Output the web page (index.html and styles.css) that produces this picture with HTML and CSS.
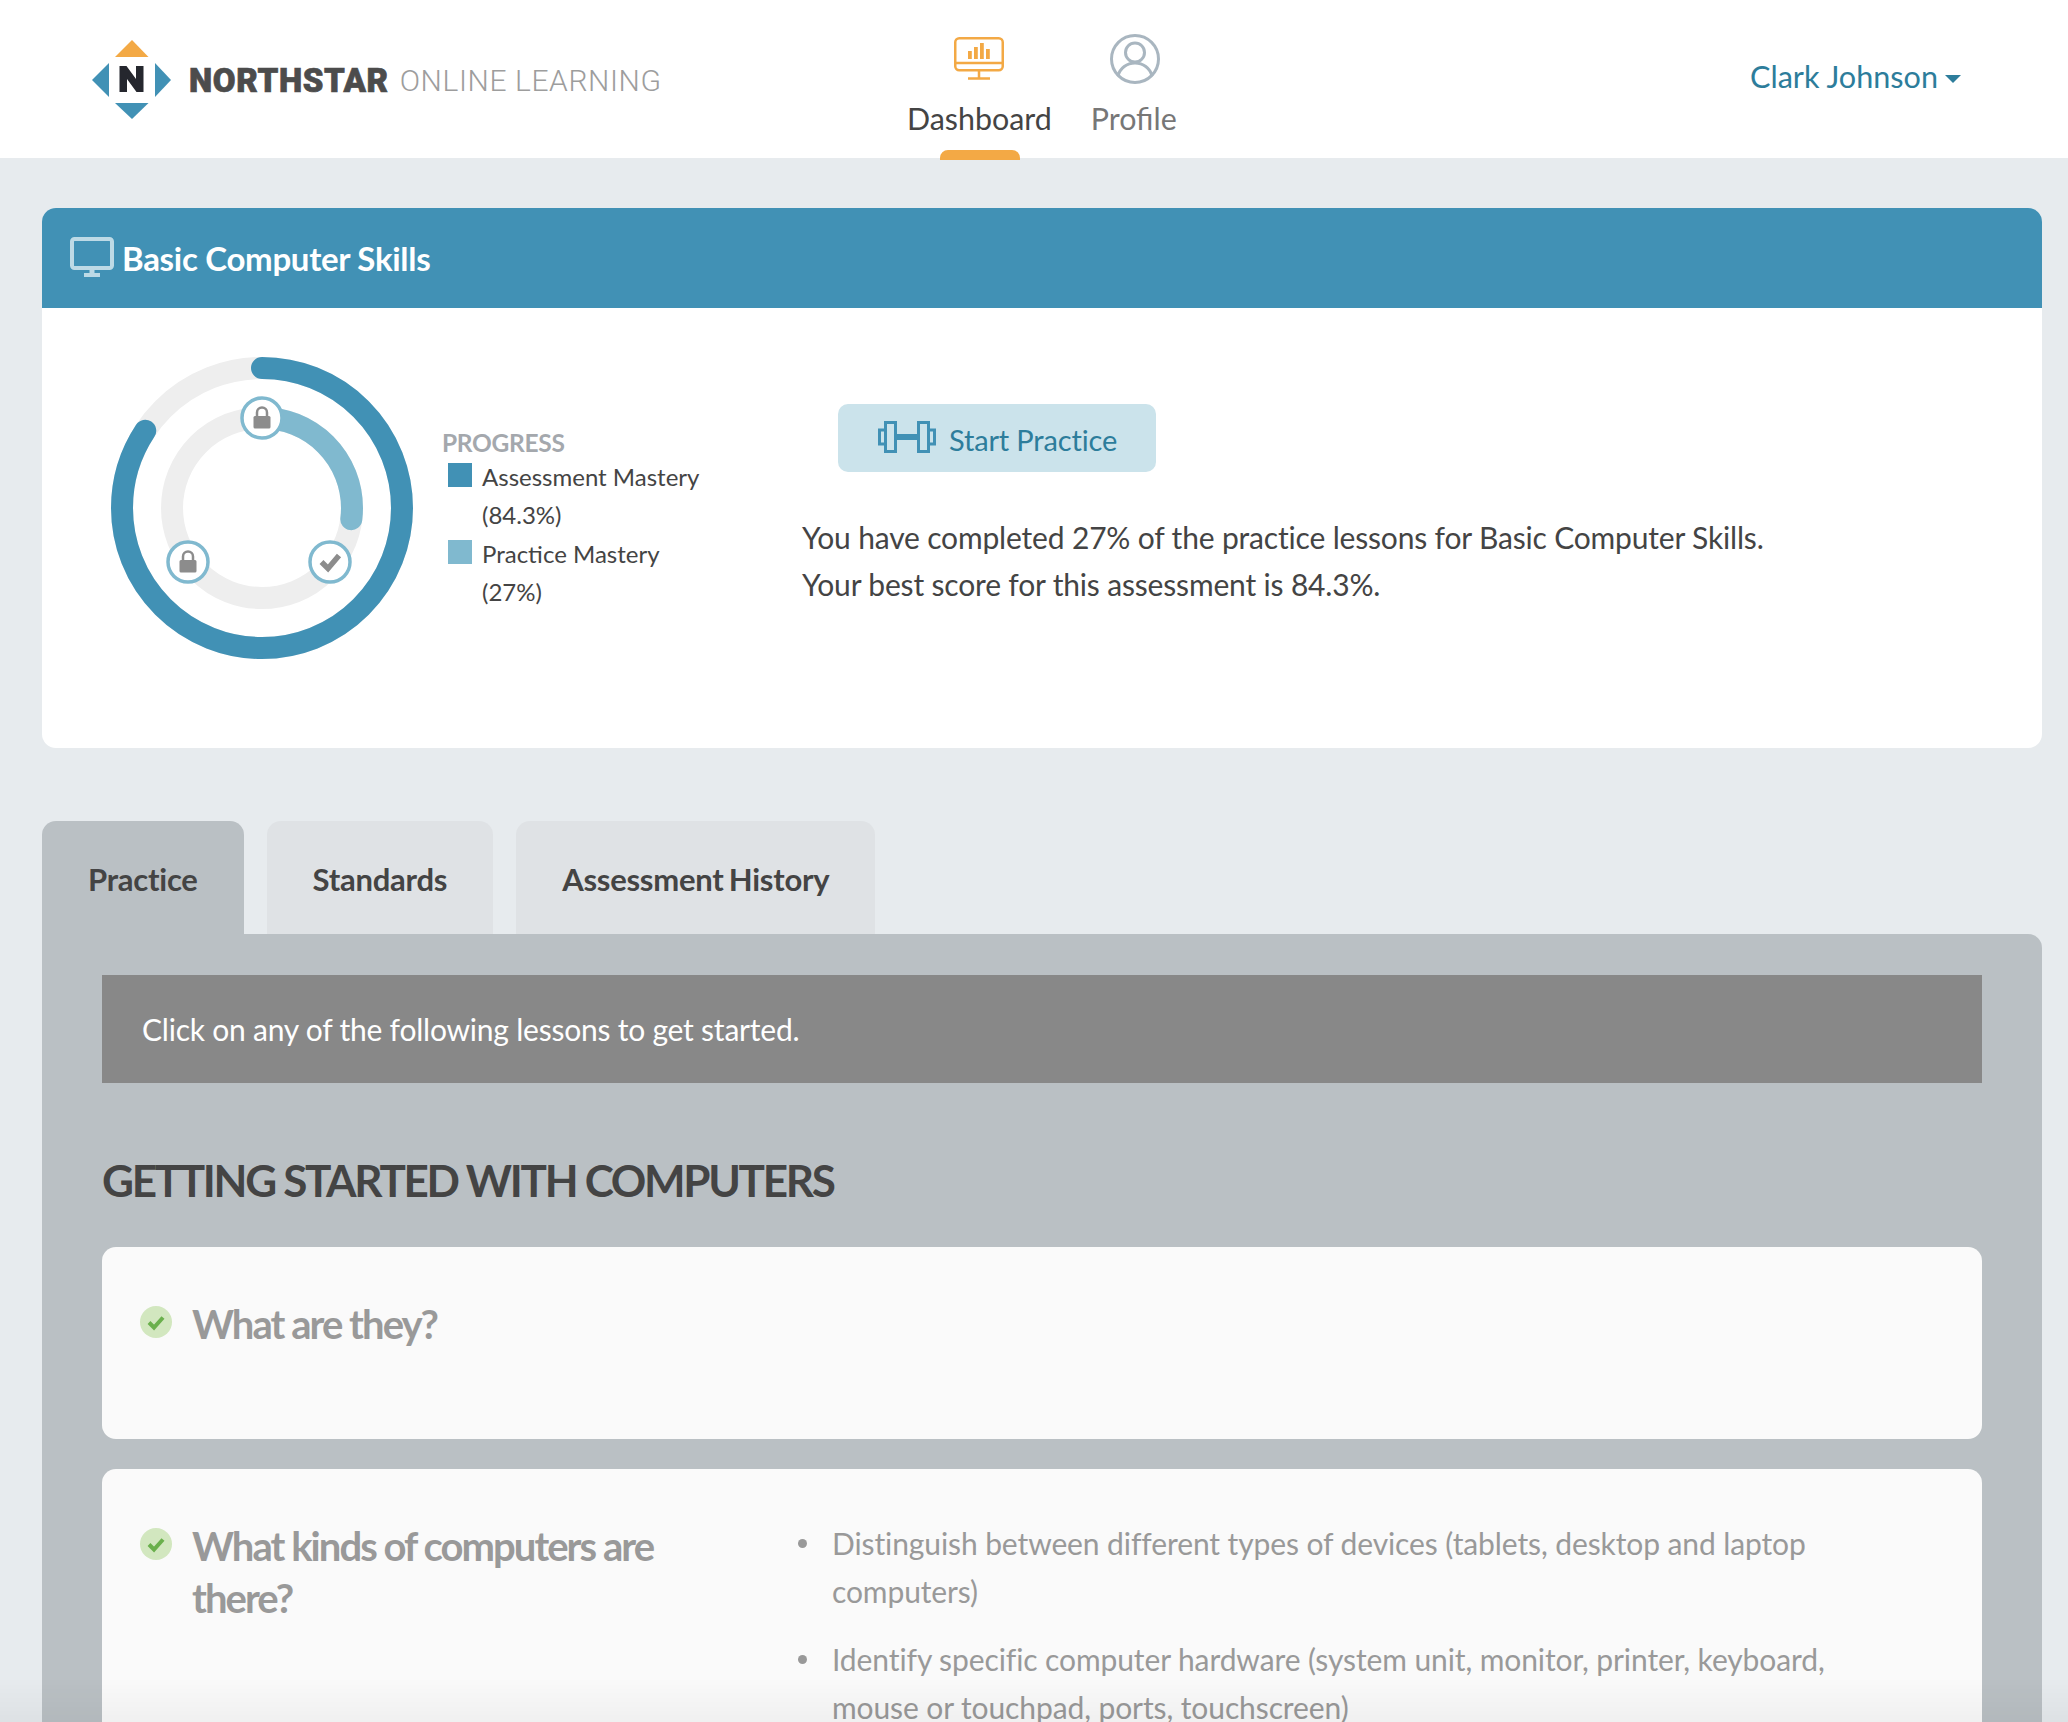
FILE: index.html
```html
<!DOCTYPE html>
<html lang="en">
<head>
<meta charset="utf-8">
<title>Northstar Online Learning</title>
<link rel="stylesheet" href="styles.css">
</head>
<body>
<header class="topbar">
  <a class="logo">
    <svg class="logo-mark" width="80" height="80" viewBox="0 0 80 80">
      <path d="M23 17 40 0 56.500 17Z" fill="#f3a945"/>
      <path d="M17 23V57L0 40Z" fill="#4191b5"/>
      <path d="M63 23V57L79 40Z" fill="#4191b5"/>
      <path d="M23 63H56.500L40 79Z" fill="#4191b5"/>
      <path d="M27.500 26h7l9.500 13V26h7.500v26h-7l-9.500-13v13h-7.500Z" fill="#25272e"/>
    </svg>
    <span class="logo-bold">NORTHSTAR</span>
    <span class="logo-light">ONLINE LEARNING</span>
  </a>
  <nav class="nav">
    <a class="nav-item is-active">
      <svg class="nav-icon" width="50" height="44" viewBox="0 0 50 44" fill="none" stroke="#f3a945" stroke-width="2.500">
        <rect x="1.250" y="1.250" width="47.500" height="32" rx="4"/>
        <path d="M1.500 26h47M25 34v7M14 41.500h22"/>
        <path d="M14 22V14h3.800v8ZM20 22V10h3.800v12ZM26 22V6h3.800v16ZM32 22V12h3.800v10Z" fill="#f3a945" stroke="none"/>
      </svg>
      <span>Dashboard</span>
    </a>
    <a class="nav-item">
      <svg class="nav-icon nav-icon-profile" width="50" height="50" viewBox="0 0 50 50" fill="none" stroke="#a9b6c0" stroke-width="3">
        <circle cx="25" cy="25" r="23.500"/>
        <circle cx="25" cy="18.500" r="9.500"/>
        <path d="M8 42c2-8 9-13 17-13s15 5 17 13"/>
      </svg>
      <span>Profile</span>
    </a>
  </nav>
  <a class="user">Clark Johnson<span class="caret"></span></a>
</header>

<main class="page">
  <section class="skill-card">
    <h1 class="skill-head">
      <svg width="44" height="40" viewBox="0 0 44 40" fill="none" stroke="#bddae6" stroke-width="4">
        <rect x="2" y="2" width="40" height="29" rx="2.500"/>
        <path d="M22 31v5" stroke-width="5"/>
        <path d="M14 38h16" stroke-width="4"/>
      </svg>
      <span>Basic Computer Skills</span>
    </h1>
    <div class="skill-body">
      <svg class="ring" width="304" height="304" viewBox="0 0 304 304" fill="none" stroke-width="22">
        <circle cx="152" cy="152" r="140" stroke="#eee"/>
        <circle cx="152" cy="152" r="140" stroke="#4191b5" stroke-linecap="round" pathLength="100" stroke-dasharray="84.3 100" transform="rotate(-90 152 152)"/>
        <circle cx="152" cy="152" r="90" stroke="#eee"/>
        <circle cx="152" cy="152" r="90" stroke="#80b9cf" stroke-linecap="round" pathLength="100" stroke-dasharray="27 100" transform="rotate(-90 152 152)"/>
        <g stroke-width="3.500" stroke="#80b9cf" fill="#fff">
          <circle cx="152" cy="62" r="20"/>
          <circle cx="78" cy="206" r="20"/>
          <circle cx="220" cy="206" r="20"/>
        </g>
        <g class="lock">
          <path d="M145 60h14a1.500 1.500 0 0 1 1.500 1.500V71a1.500 1.500 0 0 1-1.500 1.500h-14a1.500 1.500 0 0 1-1.500-1.500V61.500A1.500 1.500 0 0 1 145 60Z" fill="#8c8c8c" stroke="none"/>
          <path d="M147 60v-3.500a5 5 0 0 1 10 0V60" stroke="#8c8c8c" stroke-width="2.500"/>
        </g>
        <g class="lock">
          <path d="M71 204h14a1.500 1.500 0 0 1 1.500 1.500V215a1.500 1.500 0 0 1-1.500 1.500H71a1.500 1.500 0 0 1-1.500-1.500V205.500A1.500 1.500 0 0 1 71 204Z" fill="#8c8c8c" stroke="none"/>
          <path d="M73 204v-3.500a5 5 0 0 1 10 0V204" stroke="#8c8c8c" stroke-width="2.500"/>
        </g>
        <path d="M211.500 206l6.500 6.500 11-13" stroke="#8c8c8c" stroke-width="5.500"/>
      </svg>
      <div class="legend">
        <h2 class="legend-title">PROGRESS</h2>
        <div class="legend-row"><span class="swatch swatch-dark"></span><span class="legend-text">Assessment Mastery<br>(84.3%)</span></div>
        <div class="legend-row"><span class="swatch swatch-light"></span><span class="legend-text">Practice Mastery<br>(27%)</span></div>
      </div>
      <div class="summary">
        <a class="start-btn">
          <svg class="btn-icon" width="58" height="32" viewBox="0 0 58 32" fill="none" stroke="#4191b5" stroke-width="3">
            <rect x="7.500" y="1.500" width="10" height="29"/>
            <rect x="40.500" y="1.500" width="10" height="29"/>
            <path d="M17 16h24" stroke-width="6"/>
            <path d="M7 9H1.500v14H7M51 9h5.500v14H51"/>
          </svg>
          <span>Start Practice</span>
        </a>
        <p class="summary-text">You have completed 27% of the practice lessons for Basic Computer Skills.<br>Your best score for this assessment is 84.3%.</p>
      </div>
    </div>
  </section>

  <div class="tabs">
    <a class="tab is-active">Practice</a>
    <a class="tab">Standards</a>
    <a class="tab">Assessment History</a>
  </div>
  <section class="panel">
    <div class="banner">Click on any of the following lessons to get started.</div>
    <h2 class="unit-title">GETTING STARTED WITH COMPUTERS</h2>
    <article class="lesson lesson-short">
      <div class="lesson-head">
        <svg class="check" width="32" height="32" viewBox="0 0 32 32"><circle cx="16" cy="16" r="16" fill="#d2e7bf"/><path d="M9 16.500l5 5 9-10" fill="none" stroke="#6ab04c" stroke-width="4"/></svg>
        <h3 class="lesson-title">What are they?</h3>
      </div>
    </article>
    <article class="lesson">
      <div class="lesson-head">
        <svg class="check" width="32" height="32" viewBox="0 0 32 32"><circle cx="16" cy="16" r="16" fill="#d2e7bf"/><path d="M9 16.500l5 5 9-10" fill="none" stroke="#6ab04c" stroke-width="4"/></svg>
        <h3 class="lesson-title">What kinds of computers are there?</h3>
      </div>
      <ul class="outcomes">
        <li>Distinguish between different types of devices (tablets, desktop and laptop computers)</li>
        <li>Identify specific computer hardware (system unit, monitor, printer, keyboard, mouse or touchpad, ports, touchscreen)</li>
      </ul>
    </article>
  </section>
</main>
<div class="fade"></div>
</body>
</html>
```
FILE: styles.css
```css
* { box-sizing: border-box; }
html, body { margin: 0; padding: 0; height: 100%; overflow: hidden; }
body { background: #e7ebee; font-family: Lato, "Noto Sans", sans-serif; color: #444; }
h1, h2, h3, p, ul { margin: 0; padding: 0; }

.topbar { height: 158px; background: #fff; display: grid; grid-template-columns: 907px auto 1fr; align-items: start; position: relative; }
.logo { display: flex; align-items: center; height: 158px; padding-left: 92px; }
.logo-mark { flex: none; margin-top: 1px; }
.logo-bold { font-family: Roboto, sans-serif; font-weight: 900; font-size: 33px; color: #4c4c4c; margin-left: 17px; margin-top: 2px; letter-spacing: 0.6px; -webkit-text-stroke: 0.7px #4c4c4c; }
.logo-light { font-family: Roboto, sans-serif; font-weight: 300; font-size: 30px; color: #9d9d9d; margin-left: 11px; margin-top: 3px; letter-spacing: 0.6px; }
.nav { display: flex; gap: 39px; position: relative; }
.nav-item { display: flex; flex-direction: column; align-items: center; font-size: 30.4px; line-height: 36px; color: #777; position: relative; height: 158px; }
.nav-item.is-active { color: #444; }
.nav-icon { margin-top: 34px; height: 50px; display: block; }
.nav-icon-profile { margin-left: 2px; }
.nav-item span { margin-top: 16px; }
.nav-item.is-active .nav-icon { margin-top: 37px; height: 44px; margin-bottom: 3px; }
.nav-item.is-active::after { content: ""; position: absolute; left: 33px; top: 150px; width: 80px; height: 10px; background: #f3a945; border-radius: 8px 8px 0 0; }
.user { justify-self: end; padding-right: 107px; margin-top: 57px; font-size: 30.6px; line-height: 40px; color: #2d7d9b; display: flex; align-items: center; }
.caret { width: 0; height: 0; border-left: 8.500px solid transparent; border-right: 8.500px solid transparent; border-top: 8.500px solid #2d7d9b; margin-left: 7px; margin-top: 4px; }

.page { padding: 50px 26px 0 42px; }
.skill-card { background: #fff; border-radius: 14px; overflow: hidden; height: 540px; }
.skill-head { height: 100px; background: #4191b5; color: #fff; font-size: 33px; font-weight: 700; display: flex; align-items: center; padding-left: 28px; gap: 8px; letter-spacing: -0.3px; }
.skill-head svg { margin-top: -2px; }
.skill-body { display: flex; align-items: flex-start; padding: 48px 0 0 68px; }
.ring { flex: none; }
.legend { flex: none; width: 388px; padding: 72px 0 0 28px; }
.legend-title { font-size: 24.5px; line-height: 30px; font-weight: 700; color: #a4a8ad; letter-spacing: -0.3px; margin-bottom: 4px; }
.legend-row { display: flex; align-items: flex-start; padding-left: 6px; }
.swatch { flex: none; width: 24px; height: 24px; margin-top: 1px; }
.swatch-dark { background: #4191b5; }
.swatch-light { background: #80b9cf; }
.legend-text { font-size: 24px; line-height: 38px; margin-left: 10px; margin-top: -4px; color: #444; }
.legend-row + .legend-row { margin-top: 5px; }
.summary { flex: 1; padding-top: 48px; }
.start-btn { display: flex; align-items: center; width: 318px; height: 68px; margin-left: 36px; background: #cbe3eb; border-radius: 10px; color: #2d7d9b; font-size: 29px; padding-left: 40px; gap: 13px; letter-spacing: -0.15px; }
.btn-icon { margin-top: -2px; }
.start-btn span { margin-top: 2px; }
.summary-text { margin-top: 41px; padding-top: 1px; font-size: 30px; line-height: 47px; letter-spacing: -0.17px; color: #444; }

.tabs { display: flex; gap: 23px; margin-top: 73px; }
.tab { height: 113px; padding: 2px 46px 0; display: flex; align-items: center; background: #dfe2e5; border-radius: 14px 14px 0 0; font-size: 31px; font-weight: 700; color: #444; letter-spacing: -0.25px; word-spacing: -2px; }
.tab.is-active { background: #bac0c4; }
.panel { background: #bac0c4; border-radius: 0 14px 0 0; padding: 41px 60px 0; }
.banner { height: 108px; background: #888; color: #fff; font-size: 30px; letter-spacing: -0.22px; display: flex; align-items: center; padding-left: 40px; }
.unit-title { margin-top: 70px; font-size: 44px; line-height: 54px; font-weight: 700; color: #444; letter-spacing: -2.3px; }
.lesson { display: flex; align-items: flex-start; background: #fafafa; border-radius: 14px; margin-top: 30px; padding: 50px 0 0 38px; min-height: 400px; }
.unit-title + .lesson { margin-top: 40px; }
.lesson-short { min-height: 192px; }
.lesson-head { display: flex; align-items: flex-start; flex: none; width: 660px; gap: 20px; }
.check { flex: none; margin-top: 9px; }
.lesson-title { font-size: 40px; line-height: 52px; font-weight: 700; color: #999; letter-spacing: -1.95px; width: 480px; margin-top: 1px; }
.outcomes { list-style: none; width: 1060px; font-size: 30px; line-height: 48px; letter-spacing: -0.1px; color: #999; }
.outcomes li { position: relative; padding-left: 32px; margin-bottom: 20px; }
.outcomes li::before { content: ""; position: absolute; left: -2px; top: 20px; width: 9px; height: 9px; border-radius: 50%; background: #999; }

.fade { position: fixed; left: 0; right: 0; bottom: 0; height: 44px; background: linear-gradient(rgba(0,0,0,0), rgba(0,0,0,0.04)); pointer-events: none; }
```
